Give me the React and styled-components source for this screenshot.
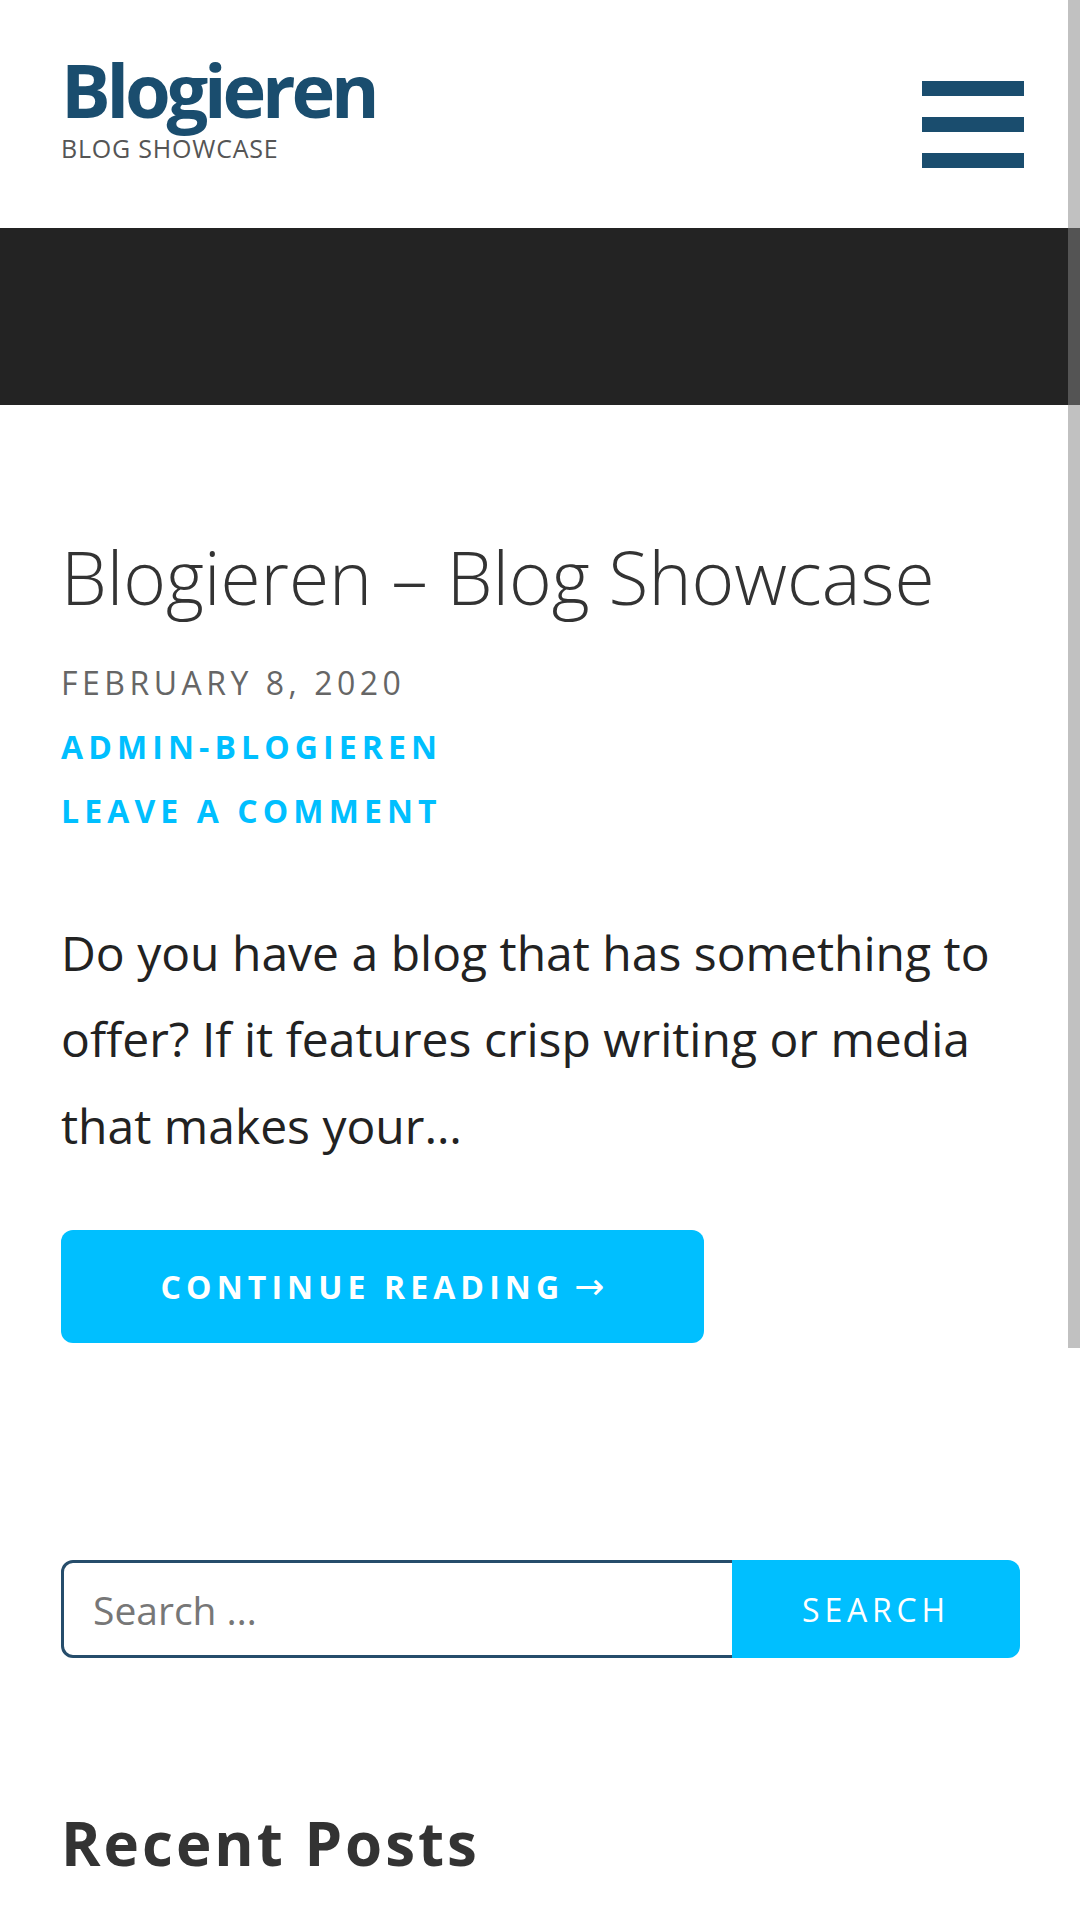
import styled, { createGlobalStyle } from 'styled-components'

const GlobalStyle = createGlobalStyle`
body{
margin:0;
background:#fff;
font-family:"Open Sans", "Noto Sans", sans-serif;
color:#222;
}
`

function App() {
    return (
        <>
            <GlobalStyle />
            <Window>
                <Page>
                    <Header>
                        <Brand>
                            <SiteTitle href="#">Blogieren</SiteTitle>
                            <Tagline>Blog Showcase</Tagline>
                        </Brand>
                        <MenuToggle aria-label="Menu">
                            <Bar />
                            <Bar />
                            <Bar />
                        </MenuToggle>
                    </Header>
                    <Banner />
                    <Main>
                        <Article>
                            <PostTitle>Blogieren – Blog Showcase</PostTitle>
                            <Meta>
                                <MetaDate>February 8, 2020</MetaDate>
                                <MetaLink href="#">admin-blogieren</MetaLink>
                                <MetaLink href="#">Leave a Comment</MetaLink>
                            </Meta>
                            <Excerpt>
                                Do you have a blog that has something to offer? If it features crisp writing or media that makes your…
                            </Excerpt>
                            <ReadMore href="#">
                                <span>Continue Reading</span>
                                <Arrow>→</Arrow>
                            </ReadMore>
                        </Article>
                        <SearchForm onSubmit={(e) => e.preventDefault()}>
                            <SearchInput type="search" placeholder="Search …" />
                            <SearchButton type="submit">Search</SearchButton>
                        </SearchForm>
                        <Widget>
                            <WidgetTitle>Recent Posts</WidgetTitle>
                        </Widget>
                    </Main>
                </Page>
                {/* drawn scrollbar, as in the screenshot */}
                <ScrollTrack>
                    <ScrollThumb />
                </ScrollTrack>
            </Window>
        </>
    )
}

const Window = styled.div`
display:flex;
align-items:flex-start;
height:1920px;
overflow:hidden;
`
const Page = styled.div`
flex:1;
min-width:0;
`
const ScrollTrack = styled.div`
width:12px;
flex-shrink:0;
align-self:stretch;
background:#fff;
`
const ScrollThumb = styled.div`
height:1348px;
background:linear-gradient(#c1c1c1 0 228px, #545454 228px 405px, #c1c1c1 405px);
`
const Header = styled.header`
display:flex;
justify-content:space-between;
align-items:flex-start;
height:228px;
box-sizing:border-box;
padding:53px 44px 0 61px;
`
const Brand = styled.div`
display:flex;
flex-direction:column;
`
const SiteTitle = styled.a`
font-size:74px;
line-height:74px;
font-weight:700;
letter-spacing:-4.2px;
color:#1a4d6e;
text-decoration:none;
`
const Tagline = styled.p`
margin:9px 0 0;
font-size:25px;
line-height:25px;
letter-spacing:0.8px;
text-transform:uppercase;
color:#555;
`
const MenuToggle = styled.button`
display:flex;
flex-direction:column;
gap:21px;
margin-top:28px;
padding:0;
border:none;
background:none;
cursor:pointer;
`
const Bar = styled.span`
display:block;
width:102px;
height:15px;
background:#1a4d6e;
`
const Banner = styled.div`
height:177px;
background:#232323;
`
const Main = styled.main`
padding:127px 48px 0 61px;
`
const Article = styled.article`
display:flex;
flex-direction:column;
align-items:flex-start;
`
const PostTitle = styled.h1`
margin:0;
font-size:73px;
line-height:90px;
font-weight:300;
color:#333;
`
const Meta = styled.div`
display:flex;
flex-direction:column;
margin-top:29px;
font-size:32px;
line-height:64px;
letter-spacing:4.5px;
text-transform:uppercase;
`
const MetaDate = styled.span`
color:#666;
`
const MetaLink = styled.a`
font-weight:700;
letter-spacing:5.1px;
color:#00bfff;
text-decoration:none;
`
const Excerpt = styled.p`
margin:67px 0 0;
font-size:48px;
line-height:86.4px;
color:#222;
`
const ReadMore = styled.a`
display:flex;
align-items:center;
justify-content:center;
margin-top:61px;
width:643px;
height:113px;
border-radius:12px;
background:#00bfff;
color:#fff;
font-size:32px;
font-weight:700;
letter-spacing:5.1px;
text-transform:uppercase;
text-decoration:none;
`
const Arrow = styled.span`
margin-left:10px;
font-family:"DejaVu Sans", sans-serif;
font-weight:400;
font-size:36px;
line-height:1;
letter-spacing:0;
`
const SearchForm = styled.form`
display:flex;
margin-top:217px;
width:959px;
height:98px;
`
const SearchInput = styled.input`
flex:1;
min-width:0;
box-sizing:border-box;
height:100%;
margin-right:-12px;
padding:0 40px 0 29px;
border:3px solid #264d6b;
border-radius:12px;
font-family:"Open Sans", sans-serif;
font-size:39px;
color:#333;
outline:none;
&::placeholder{
color:#777;
}
`
const SearchButton = styled.button`
position:relative;
width:288px;
height:100%;
border:none;
border-radius:0 12px 12px 0;
background:#00bfff;
color:#fff;
font-family:"Open Sans", sans-serif;
font-size:32px;
letter-spacing:4.8px;
text-transform:uppercase;
cursor:pointer;
`
const Widget = styled.section`
margin-top:149px;
`
const WidgetTitle = styled.h2`
margin:0;
font-size:60px;
line-height:72px;
font-weight:700;
letter-spacing:3px;
color:#333;
`

export default App
